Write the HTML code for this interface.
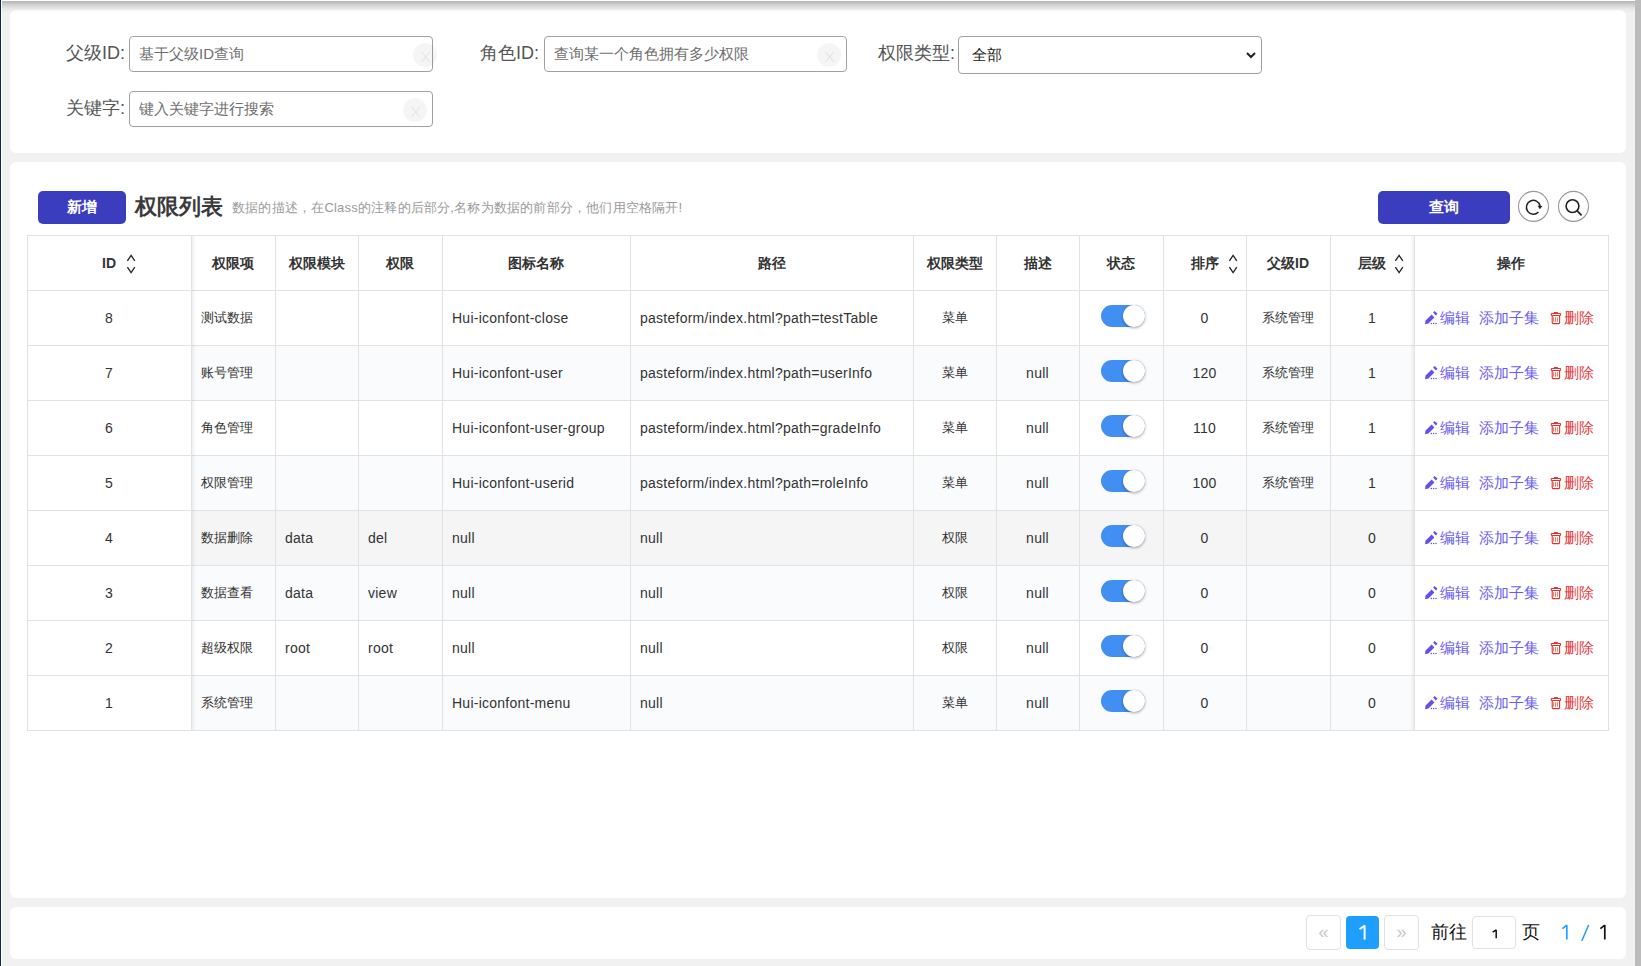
<!DOCTYPE html>
<html><head><meta charset="utf-8"><style>
*{box-sizing:border-box;margin:0;padding:0}
html,body{width:1641px;height:966px;overflow:hidden;background:#f1f1f1;font-family:"Liberation Sans",sans-serif;color:#333;position:relative}
.abs{position:absolute}
.card{position:absolute;background:#fff;border-radius:6px}
.lbl{position:absolute;font-size:18px;color:#555;line-height:20px;white-space:nowrap}
.inp{position:absolute;border:1px solid #a0a0a0;border-radius:4px;background:#fff;height:36px;width:304px}
.ph{position:absolute;left:9px;top:8px;font-size:15px;line-height:17px;color:#6e6e6e;white-space:nowrap}
.clr{position:absolute;width:24px;height:24px;border-radius:12px;background:rgba(0,0,0,.04);top:6px}
.clr span{position:absolute;left:0;top:3px;width:24px;text-align:center;font-size:15px;color:#e6e6e6;line-height:18px}
.btn{position:absolute;background:#3b3dbf;color:#fff;border-radius:5px;text-align:center;font-size:14px}
.circ{position:absolute;width:31px;height:31px;border:1px solid #8c8c8c;border-radius:50%;background:#fff}
.vl{position:absolute;width:1px;background:#e2e2e2}
.hl{position:absolute;height:1px;background:#e2e2e2}
.cell{position:absolute;font-size:14px;letter-spacing:.25px;line-height:16px;white-space:nowrap;color:#333}
.cj{font-size:13px;letter-spacing:0}
.hd{position:absolute;font-size:14px;font-weight:bold;line-height:16px;white-space:nowrap;color:#333}
.sort{position:absolute}
.tg{position:absolute;width:44px;height:22px;border-radius:11px;background:#428ff4}
.tg i{position:absolute;right:0;top:0;width:22px;height:22px;border-radius:50%;background:#fff;box-shadow:0 1px 3px rgba(0,0,0,.35)}
.act{position:absolute;font-size:14.5px;line-height:16px;white-space:nowrap}
.pg{position:absolute;border:1px solid #e2e2e2;border-radius:4px;background:#fff;width:35px;height:35px;text-align:center;color:#c8c8c8;font-size:18px;line-height:32px}
</style></head><body>
<div class="abs" style="left:0;top:0;width:1px;height:966px;background:#0d2a4c"></div>
<div class="abs" style="left:1px;top:0;width:1px;height:966px;background:#fff"></div>
<div class="abs" style="left:1635px;top:0;width:6px;height:966px;background:#bbbbbb"></div>

<div class="card" style="left:10px;top:10px;width:1616px;height:143px"></div>
<div class="card" style="left:10px;top:162px;width:1616px;height:736px"></div>
<div class="card" style="left:10px;top:907px;width:1616px;height:52px"></div>
<div class="abs" style="left:2px;top:0;width:1633px;height:1px;background:#fff"></div>
<div class="abs" style="left:2px;top:1px;width:1633px;height:12px;background:linear-gradient(to bottom,rgba(0,0,0,.26),rgba(0,0,0,.12) 35%,rgba(0,0,0,.03) 70%,rgba(0,0,0,0))"></div>
<div class="lbl" style="left:66px;top:43px">父级ID:</div>
<div class="inp" style="left:129px;top:36px;width:304px"><div class="ph">基于父级ID查询</div><div class="clr" style="left:283px"><svg width="24" height="24" viewBox="0 0 24 24" style="position:absolute;left:0;top:0"><path d="M8.6 9 L16.8 18.9 M16.8 9 L8.6 18.9" stroke="#e4e4e4" stroke-width="1.1" fill="none"/></svg></div></div>
<div class="lbl" style="left:480px;top:43px">角色ID:</div>
<div class="inp" style="left:544px;top:36px;width:303px"><div class="ph">查询某一个角色拥有多少权限</div><div class="clr" style="left:272px"><svg width="24" height="24" viewBox="0 0 24 24" style="position:absolute;left:0;top:0"><path d="M8.6 9 L16.8 18.9 M16.8 9 L8.6 18.9" stroke="#e4e4e4" stroke-width="1.1" fill="none"/></svg></div></div>
<div class="lbl" style="left:878px;top:43px">权限类型:</div>
<div class="inp" style="left:958px;top:36px;height:38px"><div class="abs" style="left:13px;top:9px;font-size:15px;line-height:18px;color:#222">全部</div><svg class="abs" style="left:287px;top:15px" width="10" height="7" viewBox="0 0 10 7"><path d="M1 1 L5 5 L9 1" fill="none" stroke="#222" stroke-width="2"/></svg></div>
<div class="lbl" style="left:66px;top:98px">关键字:</div>
<div class="inp" style="left:129px;top:91px;width:304px"><div class="ph">键入关键字进行搜索</div><div class="clr" style="left:273px"><svg width="24" height="24" viewBox="0 0 24 24" style="position:absolute;left:0;top:0"><path d="M8.6 9 L16.8 18.9 M16.8 9 L8.6 18.9" stroke="#e4e4e4" stroke-width="1.1" fill="none"/></svg></div></div>
<div class="btn" style="left:38px;top:191px;width:88px;height:33px;line-height:31px;font-size:15px;font-weight:bold">新增</div>
<div class="abs" style="left:135px;top:194px;font-size:22px;font-weight:bold;line-height:26px;color:#3a3a3a">权限列表</div>
<div class="abs" style="left:232px;top:200px;font-size:13px;line-height:16px;color:#9a9a9a;letter-spacing:.2px;white-space:nowrap">数据的描述，在Class的注释的后部分,名称为数据的前部分，他们用空格隔开!</div>
<div class="btn" style="left:1378px;top:191px;width:132px;height:33px;line-height:31px;font-size:15px;font-weight:bold">查询</div>
<svg class="abs" style="left:1515px;top:188px" width="78" height="38" viewBox="1515 188 78 38"><circle cx="1533.5" cy="206.4" r="15" fill="#fff" stroke="#999" stroke-width="1.1"/><circle cx="1573.5" cy="206.4" r="15" fill="#fff" stroke="#999" stroke-width="1.1"/><path d="M1540.05 205.87 A6.9 6.9 0 1 0 1538.43 211.92" fill="none" stroke="#222" stroke-width="1.5"/><path d="M1537.6 205.5 L1542.4 206.0 L1539.8 209.3 Z" fill="#222"/><circle cx="1572.5" cy="206.1" r="6.4" fill="none" stroke="#222" stroke-width="1.6"/><path d="M1577.0 210.6 L1581.6 215.4" stroke="#222" stroke-width="1.7"/></svg>
<div class="abs" style="left:191px;top:345px;width:1223px;height:55px;background:#fafbfd"></div>
<div class="abs" style="left:191px;top:455px;width:1223px;height:55px;background:#fafbfd"></div>
<div class="abs" style="left:191px;top:510px;width:1223px;height:55px;background:#f5f5f5"></div>
<div class="abs" style="left:191px;top:565px;width:1223px;height:55px;background:#fafbfd"></div>
<div class="abs" style="left:191px;top:675px;width:1223px;height:55px;background:#fafbfd"></div>
<div class="hl" style="left:27px;top:235px;width:1582px"></div>
<div class="hl" style="left:27px;top:290px;width:1582px"></div>
<div class="hl" style="left:27px;top:345px;width:1582px"></div>
<div class="hl" style="left:27px;top:400px;width:1582px"></div>
<div class="hl" style="left:27px;top:455px;width:1582px"></div>
<div class="hl" style="left:27px;top:510px;width:1582px"></div>
<div class="hl" style="left:27px;top:565px;width:1582px"></div>
<div class="hl" style="left:27px;top:620px;width:1582px"></div>
<div class="hl" style="left:27px;top:675px;width:1582px"></div>
<div class="hl" style="left:27px;top:730px;width:1582px"></div>
<div class="vl" style="left:27px;top:235px;height:496px"></div>
<div class="vl" style="left:191px;top:235px;height:496px"></div>
<div class="vl" style="left:275px;top:235px;height:496px"></div>
<div class="vl" style="left:358px;top:235px;height:496px"></div>
<div class="vl" style="left:442px;top:235px;height:496px"></div>
<div class="vl" style="left:630px;top:235px;height:496px"></div>
<div class="vl" style="left:913px;top:235px;height:496px"></div>
<div class="vl" style="left:996px;top:235px;height:496px"></div>
<div class="vl" style="left:1079px;top:235px;height:496px"></div>
<div class="vl" style="left:1163px;top:235px;height:496px"></div>
<div class="vl" style="left:1246px;top:235px;height:496px"></div>
<div class="vl" style="left:1330px;top:235px;height:496px"></div>
<div class="vl" style="left:1414px;top:235px;height:496px"></div>
<div class="vl" style="left:1608px;top:235px;height:496px"></div>
<div class="abs" style="left:192px;top:236px;width:4px;height:494px;background:linear-gradient(to right,rgba(0,0,0,.06),rgba(0,0,0,0))"></div>
<div class="abs" style="left:1410px;top:236px;width:4px;height:494px;background:linear-gradient(to left,rgba(0,0,0,.06),rgba(0,0,0,0))"></div>
<div class="hd" style="left:27px;top:255px;width:164px;text-align:center">ID</div>
<div class="hd" style="left:191px;top:255px;width:84px;text-align:center">权限项</div>
<div class="hd" style="left:275px;top:255px;width:83px;text-align:center">权限模块</div>
<div class="hd" style="left:358px;top:255px;width:84px;text-align:center">权限</div>
<div class="hd" style="left:442px;top:255px;width:188px;text-align:center">图标名称</div>
<div class="hd" style="left:630px;top:255px;width:283px;text-align:center">路径</div>
<div class="hd" style="left:913px;top:255px;width:83px;text-align:center">权限类型</div>
<div class="hd" style="left:996px;top:255px;width:83px;text-align:center">描述</div>
<div class="hd" style="left:1079px;top:255px;width:84px;text-align:center">状态</div>
<div class="hd" style="left:1163px;top:255px;width:83px;text-align:center">排序</div>
<div class="hd" style="left:1246px;top:255px;width:84px;text-align:center">父级ID</div>
<div class="hd" style="left:1330px;top:255px;width:84px;text-align:center">层级</div>
<div class="hd" style="left:1414px;top:255px;width:194px;text-align:center">操作</div>
<svg class="sort" style="left:124px;top:253px" width="14" height="22" viewBox="0 0 14 22"><path d="M3.4 7.8 L7.1 2.3 L10.8 7.8" fill="none" stroke="#222" stroke-width="1.3"/><path d="M3.4 14.1 L7.1 19.6 L10.8 14.1" fill="none" stroke="#222" stroke-width="1.3"/></svg>
<svg class="sort" style="left:1226px;top:253px" width="14" height="22" viewBox="0 0 14 22"><path d="M3.4 7.8 L7.1 2.3 L10.8 7.8" fill="none" stroke="#222" stroke-width="1.3"/><path d="M3.4 14.1 L7.1 19.6 L10.8 14.1" fill="none" stroke="#222" stroke-width="1.3"/></svg>
<svg class="sort" style="left:1392px;top:253px" width="14" height="22" viewBox="0 0 14 22"><path d="M3.4 7.8 L7.1 2.3 L10.8 7.8" fill="none" stroke="#222" stroke-width="1.3"/><path d="M3.4 14.1 L7.1 19.6 L10.8 14.1" fill="none" stroke="#222" stroke-width="1.3"/></svg>
<div class="cell" style="left:27px;top:310px;width:164px;text-align:center">8</div>
<div class="cell cj" style="left:201px;top:310px">测试数据</div>
<div class="cell" style="left:452px;top:310px">Hui-iconfont-close</div>
<div class="cell" style="left:640px;top:310px">pasteform/index.html?path=testTable</div>
<div class="cell cj" style="left:913px;top:310px;width:83px;text-align:center">菜单</div>
<div class="cell" style="left:1163px;top:310px;width:83px;text-align:center">0</div>
<div class="cell cj" style="left:1246px;top:310px;width:84px;text-align:center">系统管理</div>
<div class="cell" style="left:1330px;top:310px;width:84px;text-align:center">1</div>
<div class="tg" style="left:1101px;top:305px"><i></i></div>
<div class="act" style="left:1424px;top:310px;width:50px;height:18px"><svg width="24" height="24" viewBox="0 0 24 24" style="position:absolute;left:-4px;top:-4px"><path d="M5.0 18.2 L5.6 14.6 L11.6 8.6 L14.4 11.4 L8.4 17.4 Z" fill="#6250ea"/><path d="M13.1 6.6 L14.7 5.0 L17.5 7.8 L15.9 9.4 Z" fill="#6250ea"/><circle cx="11.3" cy="17.5" r="0.75" fill="#6250ea"/><circle cx="13.6" cy="17.5" r="0.75" fill="#6250ea"/><circle cx="16.0" cy="17.5" r="0.75" fill="#6250ea"/></svg><span class="abs" style="left:16px;top:0;color:#6a5cf0">编辑</span></div>
<div class="act" style="left:1479px;top:310px;color:#6a5cf0">添加子集</div>
<div class="act" style="left:1550px;top:310px;width:50px;height:18px"><svg width="24" height="24" viewBox="0 0 24 24" style="position:absolute;left:-5px;top:-4px"><path d="M8.9 7.2 V6.4 Q8.9 5.9 9.4 5.9 H12.4 Q12.9 5.9 12.9 6.4 V7.2 Z" fill="#e5302f"/><rect x="6.3" y="7.5" width="9.2" height="2" rx="0.5" fill="none" stroke="#e5302f" stroke-width="1.1"/><path d="M7.2 10 V16.6 Q7.2 17.6 8.2 17.6 H13.6 Q14.6 17.6 14.6 16.6 V10" fill="none" stroke="#e5302f" stroke-width="1.1"/><path d="M8.6 11.2 V15.7 M10.5 11.2 V15.7 M12.4 11.2 V15.7" stroke="#e8553a" stroke-width="0.8"/></svg><span class="abs" style="left:14px;top:0;color:#e5383b">删除</span></div>
<div class="cell" style="left:27px;top:365px;width:164px;text-align:center">7</div>
<div class="cell cj" style="left:201px;top:365px">账号管理</div>
<div class="cell" style="left:452px;top:365px">Hui-iconfont-user</div>
<div class="cell" style="left:640px;top:365px">pasteform/index.html?path=userInfo</div>
<div class="cell cj" style="left:913px;top:365px;width:83px;text-align:center">菜单</div>
<div class="cell" style="left:996px;top:365px;width:83px;text-align:center">null</div>
<div class="cell" style="left:1163px;top:365px;width:83px;text-align:center">120</div>
<div class="cell cj" style="left:1246px;top:365px;width:84px;text-align:center">系统管理</div>
<div class="cell" style="left:1330px;top:365px;width:84px;text-align:center">1</div>
<div class="tg" style="left:1101px;top:360px"><i></i></div>
<div class="act" style="left:1424px;top:365px;width:50px;height:18px"><svg width="24" height="24" viewBox="0 0 24 24" style="position:absolute;left:-4px;top:-4px"><path d="M5.0 18.2 L5.6 14.6 L11.6 8.6 L14.4 11.4 L8.4 17.4 Z" fill="#6250ea"/><path d="M13.1 6.6 L14.7 5.0 L17.5 7.8 L15.9 9.4 Z" fill="#6250ea"/><circle cx="11.3" cy="17.5" r="0.75" fill="#6250ea"/><circle cx="13.6" cy="17.5" r="0.75" fill="#6250ea"/><circle cx="16.0" cy="17.5" r="0.75" fill="#6250ea"/></svg><span class="abs" style="left:16px;top:0;color:#6a5cf0">编辑</span></div>
<div class="act" style="left:1479px;top:365px;color:#6a5cf0">添加子集</div>
<div class="act" style="left:1550px;top:365px;width:50px;height:18px"><svg width="24" height="24" viewBox="0 0 24 24" style="position:absolute;left:-5px;top:-4px"><path d="M8.9 7.2 V6.4 Q8.9 5.9 9.4 5.9 H12.4 Q12.9 5.9 12.9 6.4 V7.2 Z" fill="#e5302f"/><rect x="6.3" y="7.5" width="9.2" height="2" rx="0.5" fill="none" stroke="#e5302f" stroke-width="1.1"/><path d="M7.2 10 V16.6 Q7.2 17.6 8.2 17.6 H13.6 Q14.6 17.6 14.6 16.6 V10" fill="none" stroke="#e5302f" stroke-width="1.1"/><path d="M8.6 11.2 V15.7 M10.5 11.2 V15.7 M12.4 11.2 V15.7" stroke="#e8553a" stroke-width="0.8"/></svg><span class="abs" style="left:14px;top:0;color:#e5383b">删除</span></div>
<div class="cell" style="left:27px;top:420px;width:164px;text-align:center">6</div>
<div class="cell cj" style="left:201px;top:420px">角色管理</div>
<div class="cell" style="left:452px;top:420px">Hui-iconfont-user-group</div>
<div class="cell" style="left:640px;top:420px">pasteform/index.html?path=gradeInfo</div>
<div class="cell cj" style="left:913px;top:420px;width:83px;text-align:center">菜单</div>
<div class="cell" style="left:996px;top:420px;width:83px;text-align:center">null</div>
<div class="cell" style="left:1163px;top:420px;width:83px;text-align:center">110</div>
<div class="cell cj" style="left:1246px;top:420px;width:84px;text-align:center">系统管理</div>
<div class="cell" style="left:1330px;top:420px;width:84px;text-align:center">1</div>
<div class="tg" style="left:1101px;top:415px"><i></i></div>
<div class="act" style="left:1424px;top:420px;width:50px;height:18px"><svg width="24" height="24" viewBox="0 0 24 24" style="position:absolute;left:-4px;top:-4px"><path d="M5.0 18.2 L5.6 14.6 L11.6 8.6 L14.4 11.4 L8.4 17.4 Z" fill="#6250ea"/><path d="M13.1 6.6 L14.7 5.0 L17.5 7.8 L15.9 9.4 Z" fill="#6250ea"/><circle cx="11.3" cy="17.5" r="0.75" fill="#6250ea"/><circle cx="13.6" cy="17.5" r="0.75" fill="#6250ea"/><circle cx="16.0" cy="17.5" r="0.75" fill="#6250ea"/></svg><span class="abs" style="left:16px;top:0;color:#6a5cf0">编辑</span></div>
<div class="act" style="left:1479px;top:420px;color:#6a5cf0">添加子集</div>
<div class="act" style="left:1550px;top:420px;width:50px;height:18px"><svg width="24" height="24" viewBox="0 0 24 24" style="position:absolute;left:-5px;top:-4px"><path d="M8.9 7.2 V6.4 Q8.9 5.9 9.4 5.9 H12.4 Q12.9 5.9 12.9 6.4 V7.2 Z" fill="#e5302f"/><rect x="6.3" y="7.5" width="9.2" height="2" rx="0.5" fill="none" stroke="#e5302f" stroke-width="1.1"/><path d="M7.2 10 V16.6 Q7.2 17.6 8.2 17.6 H13.6 Q14.6 17.6 14.6 16.6 V10" fill="none" stroke="#e5302f" stroke-width="1.1"/><path d="M8.6 11.2 V15.7 M10.5 11.2 V15.7 M12.4 11.2 V15.7" stroke="#e8553a" stroke-width="0.8"/></svg><span class="abs" style="left:14px;top:0;color:#e5383b">删除</span></div>
<div class="cell" style="left:27px;top:475px;width:164px;text-align:center">5</div>
<div class="cell cj" style="left:201px;top:475px">权限管理</div>
<div class="cell" style="left:452px;top:475px">Hui-iconfont-userid</div>
<div class="cell" style="left:640px;top:475px">pasteform/index.html?path=roleInfo</div>
<div class="cell cj" style="left:913px;top:475px;width:83px;text-align:center">菜单</div>
<div class="cell" style="left:996px;top:475px;width:83px;text-align:center">null</div>
<div class="cell" style="left:1163px;top:475px;width:83px;text-align:center">100</div>
<div class="cell cj" style="left:1246px;top:475px;width:84px;text-align:center">系统管理</div>
<div class="cell" style="left:1330px;top:475px;width:84px;text-align:center">1</div>
<div class="tg" style="left:1101px;top:470px"><i></i></div>
<div class="act" style="left:1424px;top:475px;width:50px;height:18px"><svg width="24" height="24" viewBox="0 0 24 24" style="position:absolute;left:-4px;top:-4px"><path d="M5.0 18.2 L5.6 14.6 L11.6 8.6 L14.4 11.4 L8.4 17.4 Z" fill="#6250ea"/><path d="M13.1 6.6 L14.7 5.0 L17.5 7.8 L15.9 9.4 Z" fill="#6250ea"/><circle cx="11.3" cy="17.5" r="0.75" fill="#6250ea"/><circle cx="13.6" cy="17.5" r="0.75" fill="#6250ea"/><circle cx="16.0" cy="17.5" r="0.75" fill="#6250ea"/></svg><span class="abs" style="left:16px;top:0;color:#6a5cf0">编辑</span></div>
<div class="act" style="left:1479px;top:475px;color:#6a5cf0">添加子集</div>
<div class="act" style="left:1550px;top:475px;width:50px;height:18px"><svg width="24" height="24" viewBox="0 0 24 24" style="position:absolute;left:-5px;top:-4px"><path d="M8.9 7.2 V6.4 Q8.9 5.9 9.4 5.9 H12.4 Q12.9 5.9 12.9 6.4 V7.2 Z" fill="#e5302f"/><rect x="6.3" y="7.5" width="9.2" height="2" rx="0.5" fill="none" stroke="#e5302f" stroke-width="1.1"/><path d="M7.2 10 V16.6 Q7.2 17.6 8.2 17.6 H13.6 Q14.6 17.6 14.6 16.6 V10" fill="none" stroke="#e5302f" stroke-width="1.1"/><path d="M8.6 11.2 V15.7 M10.5 11.2 V15.7 M12.4 11.2 V15.7" stroke="#e8553a" stroke-width="0.8"/></svg><span class="abs" style="left:14px;top:0;color:#e5383b">删除</span></div>
<div class="cell" style="left:27px;top:530px;width:164px;text-align:center">4</div>
<div class="cell cj" style="left:201px;top:530px">数据删除</div>
<div class="cell" style="left:285px;top:530px">data</div>
<div class="cell" style="left:368px;top:530px">del</div>
<div class="cell" style="left:452px;top:530px">null</div>
<div class="cell" style="left:640px;top:530px">null</div>
<div class="cell cj" style="left:913px;top:530px;width:83px;text-align:center">权限</div>
<div class="cell" style="left:996px;top:530px;width:83px;text-align:center">null</div>
<div class="cell" style="left:1163px;top:530px;width:83px;text-align:center">0</div>
<div class="cell" style="left:1330px;top:530px;width:84px;text-align:center">0</div>
<div class="tg" style="left:1101px;top:525px"><i></i></div>
<div class="act" style="left:1424px;top:530px;width:50px;height:18px"><svg width="24" height="24" viewBox="0 0 24 24" style="position:absolute;left:-4px;top:-4px"><path d="M5.0 18.2 L5.6 14.6 L11.6 8.6 L14.4 11.4 L8.4 17.4 Z" fill="#6250ea"/><path d="M13.1 6.6 L14.7 5.0 L17.5 7.8 L15.9 9.4 Z" fill="#6250ea"/><circle cx="11.3" cy="17.5" r="0.75" fill="#6250ea"/><circle cx="13.6" cy="17.5" r="0.75" fill="#6250ea"/><circle cx="16.0" cy="17.5" r="0.75" fill="#6250ea"/></svg><span class="abs" style="left:16px;top:0;color:#6a5cf0">编辑</span></div>
<div class="act" style="left:1479px;top:530px;color:#6a5cf0">添加子集</div>
<div class="act" style="left:1550px;top:530px;width:50px;height:18px"><svg width="24" height="24" viewBox="0 0 24 24" style="position:absolute;left:-5px;top:-4px"><path d="M8.9 7.2 V6.4 Q8.9 5.9 9.4 5.9 H12.4 Q12.9 5.9 12.9 6.4 V7.2 Z" fill="#e5302f"/><rect x="6.3" y="7.5" width="9.2" height="2" rx="0.5" fill="none" stroke="#e5302f" stroke-width="1.1"/><path d="M7.2 10 V16.6 Q7.2 17.6 8.2 17.6 H13.6 Q14.6 17.6 14.6 16.6 V10" fill="none" stroke="#e5302f" stroke-width="1.1"/><path d="M8.6 11.2 V15.7 M10.5 11.2 V15.7 M12.4 11.2 V15.7" stroke="#e8553a" stroke-width="0.8"/></svg><span class="abs" style="left:14px;top:0;color:#e5383b">删除</span></div>
<div class="cell" style="left:27px;top:585px;width:164px;text-align:center">3</div>
<div class="cell cj" style="left:201px;top:585px">数据查看</div>
<div class="cell" style="left:285px;top:585px">data</div>
<div class="cell" style="left:368px;top:585px">view</div>
<div class="cell" style="left:452px;top:585px">null</div>
<div class="cell" style="left:640px;top:585px">null</div>
<div class="cell cj" style="left:913px;top:585px;width:83px;text-align:center">权限</div>
<div class="cell" style="left:996px;top:585px;width:83px;text-align:center">null</div>
<div class="cell" style="left:1163px;top:585px;width:83px;text-align:center">0</div>
<div class="cell" style="left:1330px;top:585px;width:84px;text-align:center">0</div>
<div class="tg" style="left:1101px;top:580px"><i></i></div>
<div class="act" style="left:1424px;top:585px;width:50px;height:18px"><svg width="24" height="24" viewBox="0 0 24 24" style="position:absolute;left:-4px;top:-4px"><path d="M5.0 18.2 L5.6 14.6 L11.6 8.6 L14.4 11.4 L8.4 17.4 Z" fill="#6250ea"/><path d="M13.1 6.6 L14.7 5.0 L17.5 7.8 L15.9 9.4 Z" fill="#6250ea"/><circle cx="11.3" cy="17.5" r="0.75" fill="#6250ea"/><circle cx="13.6" cy="17.5" r="0.75" fill="#6250ea"/><circle cx="16.0" cy="17.5" r="0.75" fill="#6250ea"/></svg><span class="abs" style="left:16px;top:0;color:#6a5cf0">编辑</span></div>
<div class="act" style="left:1479px;top:585px;color:#6a5cf0">添加子集</div>
<div class="act" style="left:1550px;top:585px;width:50px;height:18px"><svg width="24" height="24" viewBox="0 0 24 24" style="position:absolute;left:-5px;top:-4px"><path d="M8.9 7.2 V6.4 Q8.9 5.9 9.4 5.9 H12.4 Q12.9 5.9 12.9 6.4 V7.2 Z" fill="#e5302f"/><rect x="6.3" y="7.5" width="9.2" height="2" rx="0.5" fill="none" stroke="#e5302f" stroke-width="1.1"/><path d="M7.2 10 V16.6 Q7.2 17.6 8.2 17.6 H13.6 Q14.6 17.6 14.6 16.6 V10" fill="none" stroke="#e5302f" stroke-width="1.1"/><path d="M8.6 11.2 V15.7 M10.5 11.2 V15.7 M12.4 11.2 V15.7" stroke="#e8553a" stroke-width="0.8"/></svg><span class="abs" style="left:14px;top:0;color:#e5383b">删除</span></div>
<div class="cell" style="left:27px;top:640px;width:164px;text-align:center">2</div>
<div class="cell cj" style="left:201px;top:640px">超级权限</div>
<div class="cell" style="left:285px;top:640px">root</div>
<div class="cell" style="left:368px;top:640px">root</div>
<div class="cell" style="left:452px;top:640px">null</div>
<div class="cell" style="left:640px;top:640px">null</div>
<div class="cell cj" style="left:913px;top:640px;width:83px;text-align:center">权限</div>
<div class="cell" style="left:996px;top:640px;width:83px;text-align:center">null</div>
<div class="cell" style="left:1163px;top:640px;width:83px;text-align:center">0</div>
<div class="cell" style="left:1330px;top:640px;width:84px;text-align:center">0</div>
<div class="tg" style="left:1101px;top:635px"><i></i></div>
<div class="act" style="left:1424px;top:640px;width:50px;height:18px"><svg width="24" height="24" viewBox="0 0 24 24" style="position:absolute;left:-4px;top:-4px"><path d="M5.0 18.2 L5.6 14.6 L11.6 8.6 L14.4 11.4 L8.4 17.4 Z" fill="#6250ea"/><path d="M13.1 6.6 L14.7 5.0 L17.5 7.8 L15.9 9.4 Z" fill="#6250ea"/><circle cx="11.3" cy="17.5" r="0.75" fill="#6250ea"/><circle cx="13.6" cy="17.5" r="0.75" fill="#6250ea"/><circle cx="16.0" cy="17.5" r="0.75" fill="#6250ea"/></svg><span class="abs" style="left:16px;top:0;color:#6a5cf0">编辑</span></div>
<div class="act" style="left:1479px;top:640px;color:#6a5cf0">添加子集</div>
<div class="act" style="left:1550px;top:640px;width:50px;height:18px"><svg width="24" height="24" viewBox="0 0 24 24" style="position:absolute;left:-5px;top:-4px"><path d="M8.9 7.2 V6.4 Q8.9 5.9 9.4 5.9 H12.4 Q12.9 5.9 12.9 6.4 V7.2 Z" fill="#e5302f"/><rect x="6.3" y="7.5" width="9.2" height="2" rx="0.5" fill="none" stroke="#e5302f" stroke-width="1.1"/><path d="M7.2 10 V16.6 Q7.2 17.6 8.2 17.6 H13.6 Q14.6 17.6 14.6 16.6 V10" fill="none" stroke="#e5302f" stroke-width="1.1"/><path d="M8.6 11.2 V15.7 M10.5 11.2 V15.7 M12.4 11.2 V15.7" stroke="#e8553a" stroke-width="0.8"/></svg><span class="abs" style="left:14px;top:0;color:#e5383b">删除</span></div>
<div class="cell" style="left:27px;top:695px;width:164px;text-align:center">1</div>
<div class="cell cj" style="left:201px;top:695px">系统管理</div>
<div class="cell" style="left:452px;top:695px">Hui-iconfont-menu</div>
<div class="cell" style="left:640px;top:695px">null</div>
<div class="cell cj" style="left:913px;top:695px;width:83px;text-align:center">菜单</div>
<div class="cell" style="left:996px;top:695px;width:83px;text-align:center">null</div>
<div class="cell" style="left:1163px;top:695px;width:83px;text-align:center">0</div>
<div class="cell" style="left:1330px;top:695px;width:84px;text-align:center">0</div>
<div class="tg" style="left:1101px;top:690px"><i></i></div>
<div class="act" style="left:1424px;top:695px;width:50px;height:18px"><svg width="24" height="24" viewBox="0 0 24 24" style="position:absolute;left:-4px;top:-4px"><path d="M5.0 18.2 L5.6 14.6 L11.6 8.6 L14.4 11.4 L8.4 17.4 Z" fill="#6250ea"/><path d="M13.1 6.6 L14.7 5.0 L17.5 7.8 L15.9 9.4 Z" fill="#6250ea"/><circle cx="11.3" cy="17.5" r="0.75" fill="#6250ea"/><circle cx="13.6" cy="17.5" r="0.75" fill="#6250ea"/><circle cx="16.0" cy="17.5" r="0.75" fill="#6250ea"/></svg><span class="abs" style="left:16px;top:0;color:#6a5cf0">编辑</span></div>
<div class="act" style="left:1479px;top:695px;color:#6a5cf0">添加子集</div>
<div class="act" style="left:1550px;top:695px;width:50px;height:18px"><svg width="24" height="24" viewBox="0 0 24 24" style="position:absolute;left:-5px;top:-4px"><path d="M8.9 7.2 V6.4 Q8.9 5.9 9.4 5.9 H12.4 Q12.9 5.9 12.9 6.4 V7.2 Z" fill="#e5302f"/><rect x="6.3" y="7.5" width="9.2" height="2" rx="0.5" fill="none" stroke="#e5302f" stroke-width="1.1"/><path d="M7.2 10 V16.6 Q7.2 17.6 8.2 17.6 H13.6 Q14.6 17.6 14.6 16.6 V10" fill="none" stroke="#e5302f" stroke-width="1.1"/><path d="M8.6 11.2 V15.7 M10.5 11.2 V15.7 M12.4 11.2 V15.7" stroke="#e8553a" stroke-width="0.8"/></svg><span class="abs" style="left:14px;top:0;color:#e5383b">删除</span></div>
<div class="pg" style="left:1306px;top:915px">&laquo;</div>
<div class="abs" style="left:1346px;top:916px;width:33px;height:33px;border-radius:4px;background:#1e9fff"></div>
<svg class="abs" style="left:1340px;top:910px" width="301" height="45" viewBox="1340 910 301 45"><path d="M1364.6 925.3 V939.6 M1359.6 929.2 L1364.6 925.6" fill="none" stroke="#fff" stroke-width="2"/><path d="M1496.2 929.8 V938.2 M1492.6 932.2 L1496.2 930" fill="none" stroke="#111" stroke-width="1.5"/><path d="M1566.8 925 V939.6 M1562.4 928.6 L1566.8 925.2" fill="none" stroke="#1e9fff" stroke-width="1.7"/><path d="M1581.8 941 L1588.6 925" fill="none" stroke="#1e9fff" stroke-width="1.5"/><path d="M1604.8 925 V939.6 M1600.4 928.6 L1604.8 925.2" fill="none" stroke="#111" stroke-width="1.7"/></svg>
<div class="pg" style="left:1384px;top:915px">&raquo;</div>
<div class="abs" style="left:1431px;top:922px;font-size:18px;line-height:20px;color:#111">前往</div>
<div class="abs" style="left:1472px;top:916px;width:44px;height:33px;border:1px solid #e2e2e2;border-radius:4px"></div>
<div class="abs" style="left:1522px;top:922px;font-size:18px;line-height:20px;color:#111">页</div>
</body></html>
